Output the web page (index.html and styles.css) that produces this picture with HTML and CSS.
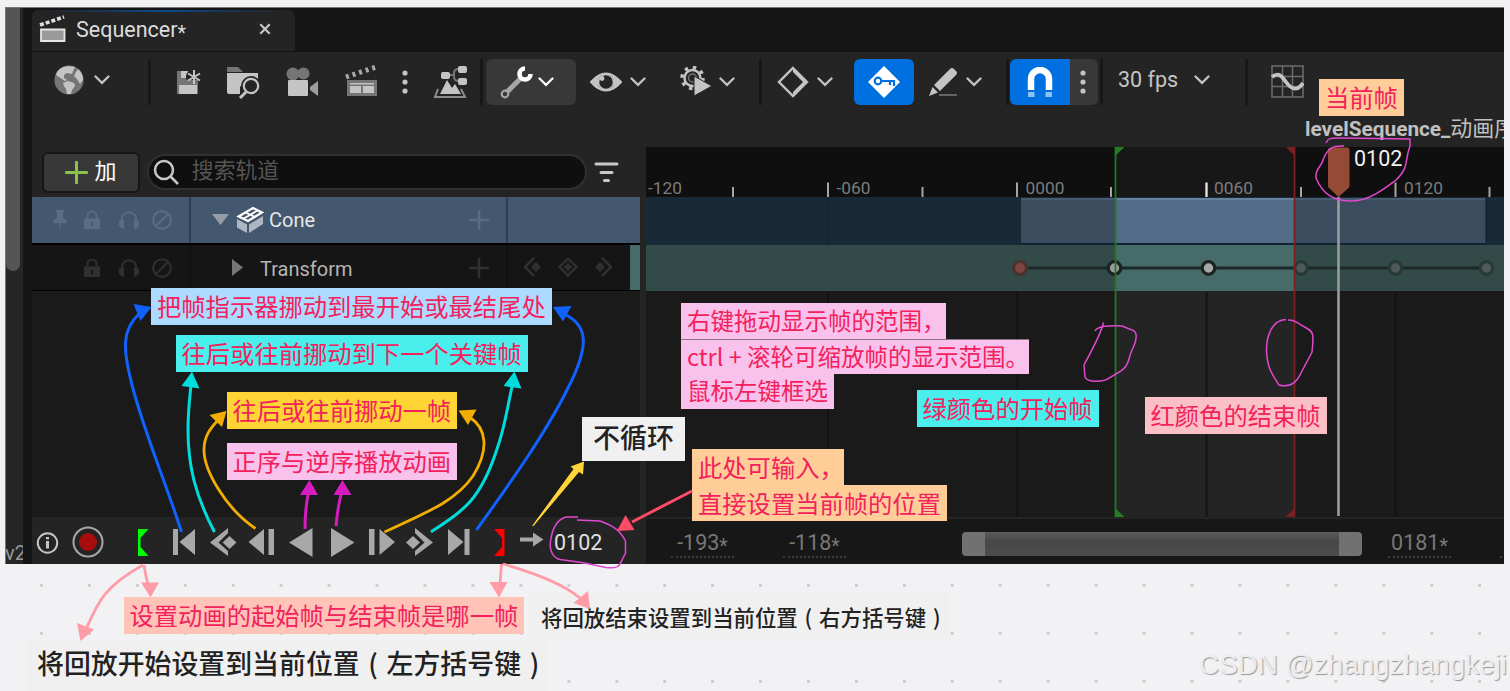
FILE: index.html
```html
<!DOCTYPE html>
<html lang="zh-CN">
<head>
    <meta charset="UTF-8">
    <meta name="viewport" content="width=device-width, initial-scale=1.0">
    <title>Sequencer</title>
    <link rel="stylesheet" href="styles.css">
</head>
<body>
    <!-- shared icons -->
    <svg class="defs" width="0" height="0">
        <symbol id="chevron" viewBox="0 0 16 10"><path d="M1.5 1.5L8 7.8l6.500-6.300" fill="none" stroke="currentColor" stroke-width="2.300" stroke-linecap="round"/></symbol>
        <symbol id="lock" viewBox="0 0 18 20"><path d="M4.500 9V6a4.500 4.500 0 0 1 9 0v3" fill="none" stroke="currentColor" stroke-width="2"/><path fill="currentColor" fill-rule="evenodd" d="M1 8.500h16V19H1zM8 12v4h2v-4z"/></symbol>
        <symbol id="solo" viewBox="0 0 22 20"><path d="M4 12C2 -1 20 -1 18 12" fill="none" stroke="currentColor" stroke-width="1.800"/><path fill="currentColor" d="M6 10v9C0 18 0 12 2 10zM16 10v9c6-1 6-7 4-9z"/></symbol>
        <symbol id="ban" viewBox="0 0 20 20"><g fill="none" stroke="currentColor" stroke-width="2"><circle cx="10" cy="10" r="8.800"/><path d="M4 16L16 4"/></g></symbol>
        <symbol id="plus" viewBox="0 0 20 20"><path d="M10 1v18M1 10h18" stroke="currentColor" stroke-width="2.600" stroke-linecap="round"/></symbol>
        <symbol id="dots" viewBox="0 0 6 24"><g fill="currentColor"><circle cx="3" cy="3" r="2.600"/><circle cx="3" cy="12" r="2.600"/><circle cx="3" cy="21" r="2.600"/></g></symbol>
    </svg>

    <main class="board">
        <div class="editor">
            <aside class="side-strip">
                <div class="side-scroll"></div>
                <span class="side-text">v2</span>
            </aside>

            <div class="sequencer">
                <div class="tabs">
                    <div class="tab">
                        <svg width="28" height="28" viewBox="0 0 28 28"><path d="M1 10L25 2" stroke="#ddd" stroke-width="3.600" stroke-dasharray="4 2"/><path d="M2 14.500h23.500v11.500H2z" fill="#9a9a9a" stroke="#e6e6e6" stroke-width="1.800"/></svg>
                        <span class="tab-title">Sequencer<span class="star">*</span></span>
                        <svg class="tab-close" width="12" height="12" viewBox="0 0 12 12"><path d="M1.300 1.300l9.400 9.400M10.700 1.300L1.300 10.700" stroke="#c4c4c4" stroke-width="2.300"/></svg>
                    </div>
                </div>

                <div class="toolbar">
                    <svg class="globe" width="30" height="30" viewBox="0 0 30 30"><circle cx="15" cy="15" r="14.600" fill="#757575"/><path fill="#c4c4c4" d="M3 7C7 2 12 0 21 2l-2 4-1 3-5-1-3 2 0 3 3 2-2 1-3-2-6-4zM24 4q5 4 5 11l-3 4-3-5-3-3 2-4zM9 18l5-2 6 2 1 3-3 4-1 4h-4l-1-5-2-3z"/></svg>
                    <svg class="chev c1" width="16" height="10"><use href="#chevron"/></svg>
                    <i class="sep s1"></i>
                    <svg class="save" width="26" height="28" viewBox="0 0 26 28"><path fill="#757575" d="M1 5h14v9H1zM1 14h21v14H1z"/><path fill="#c4c4c4" d="M5 5h7v7H5zM3 19h18v9H3z"/><circle cx="18" cy="11" r="8" fill="#242424"/><path fill="#757575" d="M9 14h13v5H9z"/><path d="M18 4v14M12 7.500l12 7M12 14.500l12-7" stroke="#c4c4c4" stroke-width="2"/></svg>
                    <svg class="folder" width="34" height="34" viewBox="0 0 34 34"><path fill="#757575" d="M1 2h11l5 5H1z"/><path fill="#c4c4c4" d="M1 8h31v7H20l-6 7v7H3a2 2 0 0 1-2-2z"/><circle cx="25" cy="21" r="10" fill="#242424"/><circle cx="25" cy="21" r="7.200" fill="none" stroke="#c4c4c4" stroke-width="2.200"/><path d="M20 27l-6 6" stroke="#c4c4c4" stroke-width="3"/></svg>
                    <svg class="camera" width="33" height="30" viewBox="0 0 33 30"><circle cx="7" cy="7" r="6.500" fill="#757575"/><circle cx="17.500" cy="6.500" r="6" fill="#757575"/><rect x="2" y="13" width="20" height="16" rx="1" fill="#c4c4c4"/><path fill="#9d9d9d" d="M24 20l8-6v15l-8-6z"/></svg>
                    <svg class="clapper" width="33" height="32" viewBox="0 0 33 32"><path d="M1 12L31 2" stroke="#a8a8a8" stroke-width="5" stroke-dasharray="3 3.900"/><path fill="#757575" d="M2 15h30v16H2z"/><path fill="#c4c4c4" d="M5 18h24v1.500H5zM5 21h11v7H5zM18 21h11v7H18z"/></svg>
                    <svg class="more" width="6" height="24"><use href="#dots"/></svg>
                    <svg class="scene" width="34" height="34" viewBox="0 0 34 34"><path d="M15 10h6M32 4h-6q-5 0-5 4v4q0 4 5 4h6" fill="none" stroke="#757575" stroke-width="2"/><g fill="#c4c4c4"><rect x="8" y="7" width="9" height="7" rx="2"/><rect x="25" y="1" width="9" height="7" rx="2"/><rect x="25" y="13" width="9" height="7" rx="2"/><path d="M7 29l7-14 5 8 3-4 6 10z"/></g><path d="M5 24L2 32h30l-4-8" fill="none" stroke="#8d8d8d" stroke-width="2"/></svg>
                    <i class="sep s2"></i>
                    <button class="tool wrench">
                        <svg width="33" height="33" viewBox="0 0 33 33"><path d="M5 28L20 13" stroke="#a6a6a6" stroke-width="5"/><circle cx="5" cy="28" r="3.300" fill="#383838" stroke="#a6a6a6" stroke-width="2.200"/><path d="M25 2.500A5.500 5.500 0 1 0 30.500 8" fill="none" stroke="#fff" stroke-width="4.600"/></svg>
                        <svg width="16" height="10" color="#fff"><use href="#chevron"/></svg>
                    </button>
                    <svg class="eye" width="32" height="20" viewBox="0 0 32 20"><path d="M1 10Q16-7 31 10Q16 27 1 10z" fill="none" stroke="#c4c4c4" stroke-width="2"/><path d="M1 10Q5 4 11 3Q5 10 11 17Q5 16 1 10M31 10Q27 4 21 3Q27 10 21 17Q27 16 31 10" fill="#c4c4c4"/><circle cx="16" cy="10" r="7.500" fill="#242424" stroke="#c4c4c4" stroke-width="1.500"/><circle cx="12" cy="6.500" r="2.400" fill="#c4c4c4"/></svg>
                    <svg class="chev c2" width="16" height="10"><use href="#chevron"/></svg>
                    <svg class="gear" width="32" height="30" viewBox="0 0 32 30"><circle cx="12.500" cy="12" r="10.500" fill="none" stroke="#c4c4c4" stroke-width="3.500" stroke-dasharray="3.400 4.850"/><circle cx="12.500" cy="12" r="8" fill="none" stroke="#c4c4c4" stroke-width="2.500"/><circle cx="12.500" cy="12" r="4" fill="none" stroke="#757575" stroke-width="1.500"/><path d="M14 10l18 10-18 10z" fill="#c4c4c4" stroke="#242424"/></svg>
                    <svg class="chev c3" width="16" height="10"><use href="#chevron"/></svg>
                    <i class="sep s3"></i>
                    <svg class="key-shape" width="32" height="32" viewBox="0 0 32 32"><path d="M16 2L30 16 16 30 2 16z" fill="none" stroke="#c4c4c4" stroke-width="2.400"/><path d="M16 2l14 14-14 14v-4l10-10-10-10z" fill="#c4c4c4"/></svg>
                    <svg class="chev c4" width="16" height="10"><use href="#chevron"/></svg>
                    <button class="tool active auto-key">
                        <svg width="32" height="32" viewBox="0 0 32 32"><path d="M16 0l16 16-16 16L0 16z" fill="#fff"/><g fill="none" stroke="#0070e0" stroke-width="2.200"><circle cx="10" cy="15" r="3.300"/><path d="M13.500 15H26v5M22 15v4"/></g></svg>
                    </button>
                    <svg class="pencil" width="30" height="30" viewBox="0 0 30 30"><path fill="#c4c4c4" d="M6 18L22 2q2-2 4 0l2 2q2 2 0 4L12 24zM4.500 20l5.500 5.500L1 29z"/><path d="M11 28h18" stroke="#757575" stroke-width="1.600"/></svg>
                    <svg class="chev c5" width="16" height="10"><use href="#chevron"/></svg>
                    <i class="sep s4"></i>
                    <button class="tool active magnet">
                        <svg width="26" height="31" viewBox="0 0 26 31"><path d="M4 23V12a8.800 8.800 0 0 1 18 0v11" fill="none" stroke="#fff" stroke-width="6.500"/><path d="M1 25h6.500v5H1zM18.500 25H25v5h-6.500z" fill="#8fc0f2"/></svg>
                    </button>
                    <button class="tool snap-more"><svg width="6" height="24"><use href="#dots"/></svg></button>
                    <i class="sep s5"></i>
                    <span class="fps">30 fps</span>
                    <svg class="chev c6" width="16" height="10"><use href="#chevron"/></svg>
                    <i class="sep s6"></i>
                    <svg class="curves" width="33" height="33" viewBox="0 0 33 33"><path d="M1 1h31v31H1zM11.500 1v31M21.500 1v31M1 11.500h31M1 21.500h31" fill="none" stroke="#6c6c6c" stroke-width="1.500"/><path d="M1 12C7 7 10 10 15 17s11 10 17 1" fill="none" stroke="#c4c4c4" stroke-width="3.800"/></svg>
                </div>

                <div class="crumb">levelSequence_<span>动画序列</span></div>

                <div class="workspace">
                    <section class="outliner">
                        <div class="search-row">
                            <button class="add"><svg width="23" height="23"><use href="#plus"/></svg>加</button>
                            <div class="search">
                                <svg width="26" height="26" viewBox="0 0 26 26"><g fill="none" stroke="#c8c8c8" stroke-width="2.500"><circle cx="11" cy="11" r="9"/><path d="M17.500 17.500L25 25"/></g></svg>
                                <span>搜索轨道</span>
                            </div>
                            <svg width="25" height="21" viewBox="0 0 25 21"><path d="M2 2h21M7 10.500h11M10.500 18.500h4" stroke="#c8c8c8" stroke-width="3" stroke-linecap="round"/></svg>
                        </div>
                        <div class="track selected">
                            <div class="flags">
                                <svg class="pin" width="14" height="20" viewBox="0 0 14 20"><path fill="currentColor" d="M3 0h8v2l-1 1v5q4 2 4 5H8l-1 7-1-7H0q0-3 4-5V3L3 2z"/></svg>
                                <svg width="18" height="20"><use href="#lock"/></svg>
                                <svg width="22" height="20"><use href="#solo"/></svg>
                                <svg width="20" height="20"><use href="#ban"/></svg>
                            </div>
                            <div class="name">
                                <svg width="17" height="12" viewBox="0 0 17 12"><path d="M0 0h17l-8.500 11z" fill="#959ca5"/></svg>
                                <svg class="cube" width="28" height="28" viewBox="0 0 28 28"><path d="M1 13l10 5.500V27L1 21.500zM13 18.500L27 10v8L13 27z" fill="#adb8c4"/><path d="M2.500 10.500L17 2l9 4.500L12 15z" fill="none" stroke="#fff" stroke-width="2.200"/><path d="M9.500 6.500l9.500 4.500M7 13l14.500-8.500" stroke="#fff" stroke-width="1.800"/></svg>
                                <span>Cone</span>
                                <svg class="row-add" width="20" height="20"><use href="#plus"/></svg>
                            </div>
                            <div class="keys"></div>
                        </div>
                        <div class="track child">
                            <div class="flags">
                                <svg class="pin" width="14" height="20"></svg>
                                <svg width="18" height="20"><use href="#lock"/></svg>
                                <svg width="22" height="20"><use href="#solo"/></svg>
                                <svg width="20" height="20"><use href="#ban"/></svg>
                            </div>
                            <div class="name">
                                <svg width="11" height="17" viewBox="0 0 11 17"><path d="M0 0l11 8.500L0 17z" fill="#777"/></svg>
                                <span>Transform</span>
                                <svg class="row-add" width="20" height="20"><use href="#plus"/></svg>
                            </div>
                            <div class="keys">
                                <svg width="20" height="20" viewBox="0 0 20 20"><path d="M12 1l-9 9 9 9" fill="none" stroke="currentColor" stroke-width="2.500"/><path d="M14 5l5 5-5 5-5-5z" fill="currentColor"/></svg>
                                <svg width="20" height="20" viewBox="0 0 20 20"><path d="M10 1.500l8.500 8.500-8.500 8.500L1.500 10z" fill="none" stroke="currentColor" stroke-width="2.300"/><path d="M10 6v8M6 10h8" stroke="currentColor" stroke-width="2.500"/></svg>
                                <svg width="20" height="20" viewBox="0 0 20 20"><path d="M8 1l9 9-9 9" fill="none" stroke="currentColor" stroke-width="2.500"/><path d="M6 5l5 5-5 5-5-5z" fill="currentColor"/></svg>
                            </div>
                        </div>
                        <div class="outliner-rest"></div>
                        <div class="transport">
                            <svg width="23" height="30" viewBox="36 527 23 30"><circle cx="47.500" cy="543" r="9.700" fill="none" stroke="#c6c6c6" stroke-width="2"/><path d="M47.500 541v7.500M47.500 537v2.300" stroke="#c6c6c6" stroke-width="3"/></svg>
                            <svg width="32" height="32" viewBox="71.500 526 32 32"><circle cx="87.500" cy="542" r="14.500" fill="none" stroke="#a8a8a8" stroke-width="2"/><circle cx="87.500" cy="542" r="9" fill="#a80d0d"/></svg>
                            <svg class="t-in" width="11" height="27" viewBox="138 529 11 27"><path d="M138 529h10.500l-8 9v9l8 9H138z" fill="#0f0"/></svg>
                            <svg class="t-start" width="22" height="26" viewBox="173 529 22 26"><path d="M173 529h5v26h-5zM195 529v26l-15.500-13z" fill="#a8a8a8"/></svg>
                            <svg class="t-prev" width="27" height="28" viewBox="210 528 27 28"><path d="M228 528v5l-9.500 9.500 9.500 8.500v5L210 542.500z" fill="#a8a8a8"/><path d="M229.500 536l7 6.500-7 6.500-7-6.500z" fill="#a8a8a8"/></svg>
                            <svg class="t-back" width="26" height="26" viewBox="248 529 26 26"><path d="M264 529v26l-15.500-13zM268.500 529h5.500v26h-5.500z" fill="#a8a8a8"/></svg>
                            <svg class="t-rev" width="24" height="29" viewBox="288.500 528 24 29"><path d="M312 528v29l-23.500-14.500z" fill="#a8a8a8"/></svg>
                            <svg class="t-play" width="24" height="29" viewBox="331 528 24 29"><path d="M331 528v29l23.500-14.500z" fill="#a8a8a8"/></svg>
                            <svg class="t-fwd" width="26" height="26" viewBox="368.500 529 26 26"><path d="M379 529v26l15.500-13zM368.500 529h5.500v26h-5.500z" fill="#a8a8a8"/></svg>
                            <svg class="t-next" width="27" height="28" viewBox="406 528 27 28"><path d="M415 528v5l9.500 9.500-9.500 8.500v5l18-13.500z" fill="#a8a8a8"/><path d="M413 536l7 6.500-7 6.500-7-6.500z" fill="#a8a8a8"/></svg>
                            <svg class="t-end" width="22" height="26" viewBox="448 529 22 26"><path d="M464.500 529h5v26h-5zM448 529v26l15.500-13z" fill="#a8a8a8"/></svg>
                            <svg class="t-out" width="11" height="27" viewBox="494 529 11 27"><path d="M504.500 529H494l8 9v9l-8 9h10.500z" fill="#f00"/></svg>
                            <svg class="t-loop" width="24" height="16" viewBox="520 532 24 16"><path d="M520 537.500h13v-5l10.500 7-10.500 7v-5h-13z" fill="#a8a8a8"/></svg>
                            <span class="frame">0102</span>
                        </div>
                    </section>

                    <section class="timeline">
                        <svg width="858" height="370" viewBox="646 147 858 370">
                            <!-- ruler -->
                            <rect x="646" y="147" width="858" height="50" fill="#0f0f0f"/>
                            <rect x="1115" y="147" width="180" height="50" fill="#171717"/>
                            <path d="M828 182.500V197M1017 182.500V197M1395.500 182.500V197M733 187v10M922.500 187v10M1111 187v10M1301 187v10M1489.500 187v10" stroke="#a5a5a5" stroke-width="2"/>
                            <path d="M1206.500 182.500V197" stroke="#e8e8e8" stroke-width="2.300"/>
                            <g class="ruler-text">
                                <text x="648" y="193.500">-120</text>
                                <text x="836.500" y="193.500">-060</text>
                                <text x="1025.500" y="193.500">0000</text>
                                <text x="1214" y="193.500">0060</text>
                                <text x="1404" y="193.500">0120</text>
                            </g>
                            <!-- object track -->
                            <rect x="646" y="197" width="858" height="48" fill="#182a38"/>
                            <path d="M828 197v48" stroke="#142430" stroke-width="2"/>
                            <rect x="1021" y="198" width="466" height="46.500" fill="#0f2233"/>
                            <rect x="1021" y="198" width="464.500" height="45" fill="#3b4c5e"/>
                            <rect x="1115" y="198" width="179.500" height="45" fill="#536d89"/>
                            <path d="M1021 199h464" stroke="#4d6075" stroke-width="1.500"/>
                            <path d="M1115 199h179" stroke="#6f8cab" stroke-width="1.500"/>
                            <!-- transform track -->
                            <rect x="646" y="245" width="858" height="46" fill="#334b48"/>
                            <rect x="1115" y="245" width="179.500" height="46" fill="#476b69"/>
                            <!-- empty area -->
                            <rect x="646" y="291" width="858" height="226" fill="#1a1a1a"/>
                            <rect x="1115" y="291" width="179.500" height="226" fill="#242424"/>
                            <path d="M828 292v225M1017 292v225M1206.500 292v225M1395.500 292v225" stroke="#131313" stroke-width="2"/>
                            <!-- keys -->
                            <path d="M1020 268h466" stroke="#1b2928" stroke-width="2.800"/>
                            <g stroke-width="3.200">
                                <circle cx="1020" cy="268" r="6.500" fill="#81443f" stroke="#4a3432"/>
                                <circle cx="1114.500" cy="268" r="6.300" fill="#9a9a9a" stroke="#1b2222"/>
                                <circle cx="1208.500" cy="268" r="6.300" fill="#a8a8a8" stroke="#1b2222"/>
                                <circle cx="1301" cy="268" r="6.300" fill="#4f5a58" stroke="#283936"/>
                                <circle cx="1395.500" cy="268" r="6.300" fill="#4f5a58" stroke="#283936"/>
                                <circle cx="1486.500" cy="268" r="6.300" fill="#4f5a58" stroke="#283936"/>
                            </g>
                            <!-- playback range -->
                            <path d="M1115.500 147v370" stroke="#227a22" stroke-width="1.800"/>
                            <path d="M1115 147h9.500l-9.500 9zM1115 508l9.500 9h-9.500z" fill="#228022"/>
                            <path d="M1294.500 147v370" stroke="#7e2020" stroke-width="1.800"/>
                            <path d="M1295 147h-9l9 9zM1295 508l-9.500 9h9.500z" fill="#7e2020"/>
                            <!-- playhead -->
                            <path d="M1338.500 197v319" stroke="#9b9b9b" stroke-width="2.600"/>
                            <path d="M1331 147.500h16q2.500 0 2.500 2.500v37l-11 10-10.500-10v-37q0-2.500 3-2.500z" fill="#944a34"/>
                            <text class="playhead-text" x="1354" y="166">0102</text>
                        </svg>
                        <div class="range-bar">
                            <span class="num n1">-193<span class="star">*</span></span>
                            <span class="num n2">-118<span class="star">*</span></span>
                            <div class="range"></div>
                            <span class="num n3">0181<span class="star">*</span></span>
                            <span class="num n4"></span>
                        </div>
                    </section>
                </div>
            </div>
        </div>

        <!-- notes pinned on the board -->
        <div class="note blue n-ends">把帧指示器挪动到最开始或最结尾处</div>
        <div class="note cyan n-keys">往后或往前挪动到下一个关键帧</div>
        <div class="note yellow n-step">往后或往前挪动一帧</div>
        <div class="note pink n-play">正序与逆序播放动画</div>
        <div class="note gray n-loop">不循环</div>
        <div class="note-stack n-mouse">
            <div class="note pink tight">右键拖动显示帧的范围，</div>
            <div class="note pink tight">ctrl + 滚轮可缩放帧的显示范围。</div>
            <div class="note pink">鼠标左键框选</div>
        </div>
        <div class="note-stack n-input">
            <div class="note orange tight">此处可输入，</div>
            <div class="note orange">直接设置当前帧的位置</div>
        </div>
        <div class="note orange n-current">当前帧</div>
        <div class="note cyan n-green">绿颜色的开始帧</div>
        <div class="note rose n-red">红颜色的结束帧</div>
        <div class="note salmon n-range">设置动画的起始帧与结束帧是哪一帧</div>
        <div class="note tip n-out">将回放结束设置到当前位置<span class="paren">(</span>右方括号键<span class="paren">)</span></div>
        <div class="note tip n-in">将回放开始设置到当前位置<span class="paren">(</span>左方括号键<span class="paren">)</span></div>

        <!-- arrows and hand-drawn circles -->
        <svg class="ink" width="1510" height="691" viewBox="0 0 1510 691" fill="none">
            <g stroke="#1062fe" stroke-width="3"><path d="M181.500 532C165 480 145 435 132 385C123 350 121 330 140 313"/><path d="M476.500 530C505 490 545 435 568 388C590 345 588 325 564 314"/></g>
            <path fill="#1062fe" d="M151.500 307l-18-3 7 17zM553 307l18.500-1-8.500 15.500z"/>
            <g stroke="#00dcdc" stroke-width="3"><path d="M214.500 532C195 495 188 465 188 430C188 410 190 396 191 385"/><path d="M431 532C464 510 480 500 496 452C506 425 508 402 512.500 385"/></g>
            <path fill="#00dcdc" d="M192 371.500l-10.500 14.500 18 2.500zM514.500 371.500L503.500 386l18 2.500z"/>
            <g stroke="#f2ae00" stroke-width="2.800"><path d="M255.500 528.500C225 508 204 470 204 450C204 436 210 429 218 420"/><path d="M384.500 532C425 513 455 502 473 476C490 449 486 428 470 417.500"/></g>
            <path fill="#f2ae00" d="M226.500 411l-17 4 12.500 12zM458.500 410.500l18-1-8.500 15.500z"/>
            <g stroke="#d61cc0" stroke-width="3"><path d="M305 529Q305 508 308.500 493"/><path d="M336 526Q338 505 341.500 493"/></g>
            <path fill="#d61cc0" d="M309.500 480l-9.500 15h18zM342.500 480l-9 15h18z"/>
            <g stroke="#ff9ca8" stroke-width="2.800"><path d="M143 565C105 586 98 602 87 627"/><path d="M144 565Q145.500 576 148 584"/><path d="M501.500 564L500 584"/><path d="M503 564C535 573 562 583 580 598"/></g>
            <path fill="#ff9ca8" d="M80.500 641l-3.500-18 17 6.500zM150.500 597.500l-9.500-15h18zM499 597.500l-9.500-15.500h18zM590 609l-16.500-6L588 591z"/>
            <path fill="#ffd43a" d="M532 526L573.500 469l-3-2.500 13.500-5-1 13-4-2.500L533.500 526z"/>
            <path d="M692 491L632 522" stroke="#ff4a68" stroke-width="3"/>
            <path d="M617 531l8.500-16 9 15z" fill="#ff4a68"/>
            <g stroke="#e048cf" stroke-width="1.500">
                <path d="M578 517H566C556 520 552 530 550.500 541C549 552 554 558 560 559.500L582 562.500L606 567.500C617 569 620 566 622 560L625.500 553V541C620 530 612 525 600 521L577 520"/>
                <path d="M1326 143C1328 138 1330 138 1340 138L1410 139L1410 146C1404 162 1410 166 1396 180C1388 186 1370 201 1352 201C1334 201 1323 195 1316 178C1315 168 1321 168 1323 160C1328 147 1334 145.500 1344 146"/>
                <path d="M1103.500 322.500C1101 334 1092 350 1084 365L1085 377C1087 383 1105 382 1109 378L1115 374.500C1131 366 1127 361 1132 350C1139 336 1136 331 1132 330L1122 326C1110 325 1097 326 1095 331"/>
                <path d="M1286 319.500C1272 320 1266.500 336 1266.500 350C1267 368 1272 374 1279 385C1290 388 1297 382 1301 373L1312 352C1314 334 1313 332 1308 329L1301 325C1296 321 1292 320 1288 320"/>
            </g>
        </svg>

        <div class="watermark">CSDN @zhangzhangkeji</div>
    </main>
</body>
</html>
```
FILE: styles.css
```css
* {
    box-sizing: border-box;
}
body {
    margin: 0;
    background: #f2f2f5;
    font-family: Roboto, "Noto Sans CJK SC", sans-serif;
    color: #c4c4c4;
}
svg {
    display: block;
    flex: none;
}
button {
    border: 0;
    padding: 0;
    font: inherit;
    color: inherit;
}
.defs {
    position: absolute;
}
.board {
    position: relative;
    width: 1510px;
    height: 691px;
    overflow: hidden;
    padding: 7px 6px 0 5px;
    background-color: #f2f2f5;
    background-image: conic-gradient(at 3px 3px, transparent 75%, #cfcfcf 0);
    background-size: 47.95px 48px;
    background-position: 40px 8px;
}
.editor {
    display: flex;
    height: 557px;
    background: #151515;
    border-top: 1px solid #777;
    border-left: 1px solid #777;
}
.side-strip {
    width: 17px;
    margin-right: 9px;
    background: #262626;
    overflow: hidden;
    display: flex;
    flex-direction: column;
    justify-content: space-between;
}
.side-scroll {
    width: 14px;
    height: 263px;
    background: #555;
    border-radius: 0 0 7px 7px;
}
.side-text {
    margin-left: -1px;
    font-size: 20px;
    line-height: 22px;
    color: #999;
}
.sequencer {
    flex: 1;
    min-width: 0;
    display: flex;
    flex-direction: column;
}

/* tabs */
.tabs {
    height: 44px;
    padding-top: 2px;
    border-bottom: 1px solid #111;
}
.tab {
    width: 263px;
    height: 41px;
    padding: 0 24px 3px 7px;
    display: flex;
    align-items: center;
    border-radius: 6px 6px 0 0;
    background: linear-gradient(90deg, #242424 5%, #0c4a8c 50%, #242424 95%) top / 100% 2px no-repeat, #242424;
}
.tab-title {
    margin-left: 9px;
    font-size: 21.5px;
    color: #dcdcdc;
}
.tab-close {
    margin-left: auto;
}
.star {
    font-size: 0.92em;
    vertical-align: -3px;
    line-height: 0;
}

/* toolbar */
.toolbar {
    height: 60px;
    display: flex;
    align-items: center;
    background: #242424;
}
.sep {
    width: 3px;
    height: 46px;
    background: #171717;
    flex: none;
}
.tool {
    height: 46px;
    display: flex;
    align-items: center;
    justify-content: center;
    border-radius: 6px;
    background: #383838;
    flex: none;
}
.tool.active {
    background: #0070e0;
}
.globe { margin: 0 0 5px 22px; }
.c1 { margin: 0 0 5px 10px; }
.s1 { margin-left: 38px; }
.save { margin: 0 0 5px 25px; }
.folder { margin-left: 24px; }
.camera { margin-left: 26px; }
.clapper { margin: 0 0 3px 26px; }
.more { margin-left: 24px; }
.scene { margin-left: 25px; }
.s2 { margin-left: 13px; }
.wrench {
    width: 90px;
    padding-right: 8px;
    margin-left: 3px;
    gap: 5px;
}
.eye { margin-left: 14px; }
.c2 { margin-left: 8px; }
.gear { margin: 0 0 2px 34px; }
.c3 { margin-left: 7px; }
.s3 { margin-left: 24px; }
.key-shape { margin-left: 15px; }
.c4 { margin-left: 8px; }
.auto-key {
    width: 60px;
    margin-left: 21px;
}
.pencil { margin-left: 14px; }
.c5 { margin-left: 8px; }
.s4 { margin-left: 24px; }
.magnet {
    width: 60px;
    margin-left: 1px;
    border-radius: 6px 0 0 6px;
}
.snap-more {
    width: 28px;
    padding-right: 2px;
    border-radius: 0 6px 6px 0;
}
.s5 { margin-left: 2px; }
.fps {
    width: 76px;
    margin: 0 0 5px 15px;
    font-size: 21.5px;
    white-space: nowrap;
}
.c6 { margin-bottom: 5px; }
.s6 { margin-left: 35px; }
.curves { margin: 0 0 2px 23px; }

.crumb {
    height: 35px;
    padding: 2px 0 0 1273px;
    background: #242424;
    font-size: 20.8px;
    font-weight: 700;
    line-height: 29px;
    white-space: nowrap;
    overflow: hidden;
    color: #c0c0c0;
}
.crumb span {
    font-size: 22px;
    font-weight: 400;
}

/* track list */
.workspace {
    flex: 1;
    display: flex;
    background: #242424;
}
.outliner {
    width: 608px;
    margin-right: 6px;
    display: flex;
    flex-direction: column;
}
.search-row {
    height: 50px;
    padding: 0 21px 0 10px;
    display: flex;
    align-items: center;
    gap: 7px;
}
.add {
    width: 98px;
    height: 41px;
    display: flex;
    align-items: center;
    justify-content: center;
    gap: 6px;
    background: #383838;
    border: 2px solid #161616;
    border-radius: 6px;
    font-size: 22px;
    line-height: 34px;
    color: #fff;
}
.add svg {
    color: #8bc24a;
}
.search {
    width: 441px;
    height: 36px;
    display: flex;
    align-items: center;
    gap: 13px;
    padding-left: 4px;
    background: #0f0f0f;
    border: 2px solid #303030;
    border-radius: 18px;
    font-size: 21.8px;
    color: #555;
}
.search span {
    padding-bottom: 7px;
}
.track {
    display: flex;
    height: 48px;
    border-bottom: 2px solid #000;
}
.track.selected {
    background: #43586f;
    color: #596c83;
}
.track.child {
    height: 46px;
    border-bottom: 1px solid #000;
    background: #151515;
    color: #303030;
}
.flags {
    width: 159px;
    padding-left: 21px;
    display: flex;
    align-items: center;
    border-right: 2px solid #2f3e50;
}
.pin { margin-right: 16px; }
.flags svg:nth-child(2) { margin-right: 17px; }
.flags svg:nth-child(3) { margin-right: 12px; }
.name {
    width: 317px;
    display: flex;
    align-items: center;
    border-right: 2px solid #2f3e50;
    padding: 0 17px 0 21px;
    font-size: 20px;
    color: #e6e6e6;
}
.cube { margin: 0 5px 0 7px; }
.row-add {
    margin-left: auto;
    color: #596c83;
}
.child .flags,
.child .name {
    border-color: #111;
}
.child .name {
    padding-left: 41px;
    color: #b4b4b4;
}
.child .name span {
    margin-left: 17px;
    padding-top: 2px;
}
.child .row-add {
    color: #303030;
}
.keys {
    flex: 1;
    display: flex;
    align-items: center;
    gap: 16px;
    padding: 0 0 2px 14px;
}
.child .keys {
    border-right: 10px solid #476b69;
}
.outliner-rest {
    flex: 1;
    background: #1a1a1a;
}
.transport {
    height: 47px;
    display: flex;
    align-items: center;
    padding: 3px 0 0 4px;
}
.transport svg:nth-child(2) { margin-left: 12.5px; }
.t-in { margin-left: 34.5px; }
.t-start { margin-left: 24px; }
.t-prev { margin-left: 15px; }
.t-back { margin-left: 11px; }
.t-rev { margin-left: 14.5px; }
.t-play { margin-left: 18.5px; }
.t-fwd { margin-left: 13.5px; }
.t-next { margin-left: 11.5px; }
.t-end { margin-left: 15px; }
.t-out { margin-left: 24px; }
.t-loop { margin: 0 0 5px 15px; }
.frame {
    margin-left: 10px;
    font-size: 21.5px;
    color: #e0e0e0;
}

/* timeline */
.timeline {
    flex: 1;
    min-width: 0;
    overflow: hidden;
}
.ruler-text {
    font-size: 17.3px;
    fill: #7c7c7c;
}
.playhead-text {
    font-size: 21.5px;
    fill: #f0f0f0;
}
.range-bar {
    height: 47px;
    border-top: 2px solid #242424;
    background: #171717;
    display: flex;
    align-items: center;
    padding: 4px 0 0 25px;
    overflow: hidden;
}
.num {
    width: 63px;
    height: 29px;
    flex: none;
    text-align: center;
    font-size: 21.5px;
    line-height: 28px;
    color: #777;
    border-bottom: 2px dotted #3c3c3c;
}
.n2 { margin-left: 49px; }
.range {
    width: 400px;
    height: 24px;
    margin-left: 116px;
    flex: none;
    border-left: 23px solid #717171;
    border-right: 23px solid #717171;
    border-radius: 4px;
    background: linear-gradient(#5c5c5c, #474747 40%, #4c4c4c);
}
.n3 { margin-left: 26px; }
.n4 { margin-left: 49px; }

/* notes */
.note {
    width: max-content;
    height: 37px;
    padding: 0 6px;
    font-family: "Noto Sans CJK SC", sans-serif;
    font-size: 24.3px;
    line-height: 35px;
    white-space: nowrap;
    color: #f3215c;
}
.board > .note,
.note-stack {
    position: absolute;
}
.blue { background: #addbff; }
.cyan { background: #4aefed; }
.yellow { background: #ffd535; }
.pink { background: #f9c2ec; }
.orange { background: #ffcd98; }
.rose { background: #fbbfc6; }
.salmon { background: #ffc3b8; }
.gray,
.tip {
    background: #f0f0f0;
    color: #222;
    font-weight: 500;
}
.n-ends { left: 151px; top: 288px; }
.n-keys { left: 175.5px; top: 335px; }
.n-step { left: 226.5px; top: 392px; }
.n-play { left: 226.5px; top: 443px; }
.note.n-loop {
    left: 582px;
    top: 417px;
    height: 44px;
    padding: 0 11px;
    font-size: 27px;
    line-height: 39px;
}
.n-mouse { left: 681px; top: 303px; }
.n-mouse .note {
    height: 36px;
    font-size: 23.5px;
}
.n-mouse .note + .note {
    border-top: 1px solid #8d7388;
    height: 35px;
    line-height: 33px;
}
.n-mouse .note:last-child {
    border-top: 0;
}
.note.tight {
    padding-right: 0;
}
.n-input { left: 692px; top: 449px; }
.n-input .note { height: 36px; }
.n-current { left: 1319px; top: 79px; }
.n-green { left: 916.5px; top: 390px; }
.n-red { left: 1144.5px; top: 397px; }
.n-range { left: 123.5px; top: 597px; }
.note.n-out {
    left: 529px;
    top: 592px;
    width: 421px;
    height: 48px;
    padding: 0 12px;
    font-size: 21.4px;
    line-height: 50px;
}
.note.n-in {
    left: 26px;
    top: 640px;
    width: 522px;
    height: 51px;
    padding: 0 11px;
    font-size: 26.9px;
    line-height: 45px;
}
.paren {
    display: inline-block;
    width: 1em;
    text-align: center;
}
.ink {
    position: absolute;
    left: 0;
    top: 0;
    pointer-events: none;
}
.watermark {
    position: absolute;
    right: 3px;
    bottom: 9px;
    font-family: "Liberation Sans", Arial, sans-serif;
    font-size: 27.8px;
    line-height: 34px;
    color: #ededf0;
    text-shadow: 1px 1px 1px #999;
}
```
